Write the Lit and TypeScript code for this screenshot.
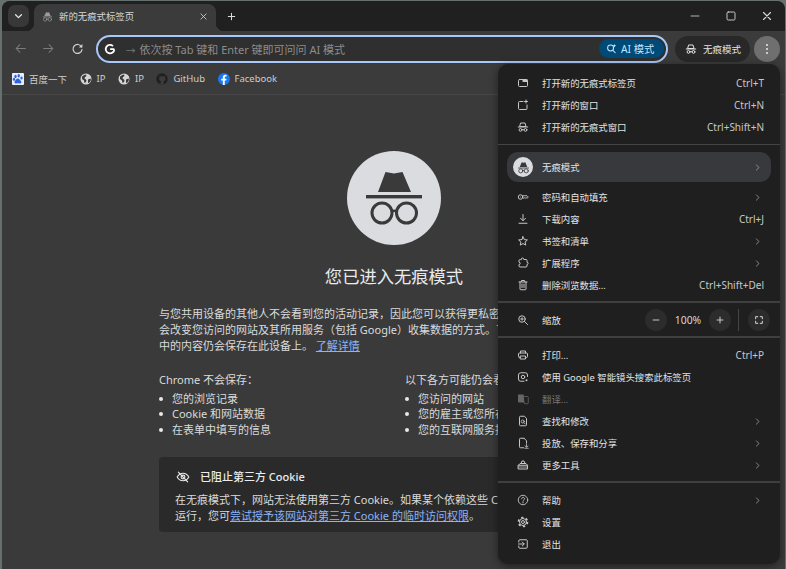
import { LitElement, html, css, svg } from "lit";
import { customElement } from "lit/decorators.js";

const S = (w = 2) => `fill:none;stroke:currentColor;stroke-width:${w};stroke-linecap:round;stroke-linejoin:round`;
const F = "fill:currentColor";

const incog = svg`<path style=${F} d="M8.700 2.500l3.300.7 3.300-.7L19 11H5z"/><path style=${F} d="M2 12.200h20v1.500H2z"/><circle cx="7" cy="18.200" r="3.800" style=${S(1.5)}/><circle cx="17" cy="18.200" r="3.800" style=${S(1.5)}/><path d="M10.700 17.600c.9-.5 1.700-.5 2.600 0" style=${S(1.4)}/>`;
const incogLine = svg`<path d="M8 4h8l2 7H6z" style=${S(2)}/><path d="M2.500 12h19" style=${S(2)}/><circle cx="7" cy="17.800" r="2.800" style=${S(2)}/><circle cx="17" cy="17.800" r="2.800" style=${S(2)}/><path d="M10 17.500h4" style=${S(1.8)}/>`;

const icons: Record<string, any> = {
  tab: svg`<rect x="3" y="5" width="18" height="14" rx="2" style=${S()}/><path style=${F} d="M11 5h10v5H11z"/>`,
  win: svg`<path d="M12 5H5a2 2 0 0 0-2 2v12a2 2 0 0 0 2 2h13a2 2 0 0 0 2-2v-7" style=${S()}/><path d="M18 2v6M15 5h6" style=${S()}/>`,
  incog,
  incogLine,
  key: svg`<circle cx="7" cy="12" r="4.500" style=${S()}/><circle cx="7" cy="12" r="1" style=${F}/><path d="M11.500 9.500H20l2.500 2.500-2 2.500-2-1-2 1-2-1-2 1" style=${S(1.8)}/>`,
  down: svg`<path d="M12 3v12M7 10.500l5 5 5-5M4 20.500h16" style=${S()}/>`,
  star: svg`<path d="M12 3.500l2.600 5.700 6.200.7-4.600 4.200 1.300 6.100L12 17.100l-5.500 3.100 1.300-6.100-4.600-4.200 6.200-.7z" style=${S()}/>`,
  ext: svg`<path d="M8.500 5V4.500a2.500 2.500 0 0 1 5 0V5H18a2 2 0 0 1 2 2v3.500a2.200 2.200 0 0 1 0 4.400V18a2 2 0 0 1-2 2H6a2 2 0 0 1-2-2v-3a2.300 2.300 0 0 0 0-4.600V7a2 2 0 0 1 2-2z" style=${S()}/>`,
  trash: svg`<path d="M4 6h16M9 5V3h6v2M6 6v14a1.500 1.500 0 0 0 1.500 1.500h9A1.500 1.500 0 0 0 18 20V6M10 10v7M14 10v7" style=${S()}/>`,
  zoom: svg`<circle cx="10" cy="10" r="6.500" style=${S()}/><path d="M15 15l6 6M10 7.500v5M7.500 10h5" style=${S()}/>`,
  print: svg`<path d="M7 8V4h10v4M7 17H5a2 2 0 0 1-2-2v-5a2 2 0 0 1 2-2h14a2 2 0 0 1 2 2v5a2 2 0 0 1-2 2h-2" style=${S()}/><path d="M7 14h10v6H7z" style=${S()}/>`,
  lens: svg`<path d="M21 11V8a4.500 4.500 0 0 0-4.500-4.500h-9A4.500 4.500 0 0 0 3 8v8a4.500 4.500 0 0 0 4.500 4.500H14" style=${S()}/><circle cx="12" cy="12" r="3.500" style=${S()}/><circle cx="19" cy="18.500" r="2" style=${F}/>`,
  trans: svg`<path style=${F} d="M2 3h11l2 16H4a2 2 0 0 1-2-2z"/><path d="M13 7h8a1.500 1.500 0 0 1 1.500 1.500V20a1.500 1.500 0 0 1-1.500 1.500h-6l-1-3" style=${S(1.6)}/>`,
  find: svg`<path d="M14 2.500H7a2 2 0 0 0-2 2v15a2 2 0 0 0 2 2h10a2 2 0 0 0 2-2V7.500z" style=${S()}/><circle cx="11.500" cy="13" r="3" style=${S(1.7)}/><path d="M14 15.500l2.500 2.500" style=${S(1.7)}/>`,
  save: svg`<path d="M14 2.500H7a2 2 0 0 0-2 2v15a2 2 0 0 0 2 2h6M14 2.500l5 5V12" style=${S()}/><path d="M19 14v5M16 18l3 2.500 3-2.500M15.500 22.500h7" style=${S(1.6)}/>`,
  tools: svg`<path d="M8 9l2-5h4l2 5M3 12.500h18V20H3zM3 12.500L6 9h12l3 3.500" style=${S()}/><path d="M3 16h18" style=${S(1.6)}/>`,
  help: svg`<circle cx="12" cy="12" r="9.500" style=${S(1.8)}/><path d="M9.200 9.500a2.900 2.900 0 1 1 4.500 2.400c-1 .7-1.700 1.300-1.700 2.600" style=${S(1.8)}/><circle cx="12" cy="17.300" r="1.200" style=${F}/>`,
  gear: svg`<circle cx="12" cy="12" r="7" style=${S(2)}/><circle cx="12" cy="12" r="3" style=${S(2)}/><circle cx="12" cy="12" r="9" style="fill:none;stroke:currentColor;stroke-width:3.400;stroke-dasharray:4.500 4.920"/>`,
  exit: svg`<path d="M3.500 8V5.500a2 2 0 0 1 2-2h13a2 2 0 0 1 2 2v13a2 2 0 0 1-2 2h-13a2 2 0 0 1-2-2V16" style=${S()}/><path d="M3 12h11M10.500 8l4 4-4 4" style=${S()}/>`,
  chev: svg`<path d="M9 5l7 7-7 7" style=${S(2)}/>`,
  minus: svg`<path d="M5 12h14" style=${S(2.2)}/>`,
  plus: svg`<path d="M12 5v14M5 12h14" style=${S(2.2)}/>`,
  full: svg`<path d="M4 9V4h5M15 4h5v5M20 15v5h-5M9 20H4v-5" style=${S(2.4)}/>`,
  back: svg`<path d="M21 12H4M11 5l-7 7 7 7" style=${S(1.9)}/>`,
  fwd: svg`<path d="M3 12h17M13 5l7 7-7 7" style=${S(1.9)}/>`,
  reload: svg`<path d="M19.500 9A8.300 8.300 0 1 0 20.300 14" style=${S(2.2)}/><path style=${F} d="M21 3.500V10h-6.500z"/>`,
  close: svg`<path d="M5 5l14 14M19 5L5 19" style=${S(2.2)}/>`,
  expand: svg`<path d="M5 9l7 7 7-7" style=${S(3)}/>`,
  minimize: svg`<path d="M4 12h16" style=${S(1.6)}/>`,
  maximize: svg`<rect x="4" y="4" width="16" height="16" rx="2.500" style=${S(1.8)}/>`,
  ai: svg`<circle cx="10" cy="11" r="6.500" style=${S(2.2)}/><path d="M15 16l5 5" style=${S(2.2)}/><path style=${F} d="M18.500 2l1.200 2.800L22.500 6l-2.800 1.200-1.200 2.800-1.200-2.800L14.500 6l2.800-1.200z"/>`,
  eyeoff: svg`<path d="M2 12s3.600-6.500 10-6.500S22 12 22 12s-3.600 6.500-10 6.500S2 12 2 12z" style=${S(1.9)}/><circle cx="12" cy="12" r="3.300" style=${S(1.9)}/><path d="M4 3.500l16 17" style=${S(1.9)}/>`,
};

const ic = (name: string) => html`<svg class="ic" viewBox="0 0 24 24">${icons[name]}</svg>`;

const heroIcon = html`<svg class="ic" viewBox="0 0 94 94">
  <path fill="#3a3a3a" d="M38.500 21l8.500 1.500 8.500-1.500L64 41H31z" />
  <rect x="19" y="44" width="56" height="3.400" fill="#3a3a3a" />
  <circle cx="35" cy="62" r="10" fill="none" stroke="#3a3a3a" stroke-width="3" />
  <circle cx="59.500" cy="62" r="10" fill="none" stroke="#3a3a3a" stroke-width="3" />
  <path d="M44.500 60.500c2-1 3.500-1 5.500 0" fill="none" stroke="#3a3a3a" stroke-width="2.600" />
</svg>`;
const googleG = html`<svg class="g" viewBox="0 0 24 24"><path d="M20.500 12.300H12.300M20.500 12.300a8.500 8.500 0 1 1-2.600-6.200" style="fill:none;stroke:#fff;stroke-width:3.600"/></svg>`;
const baidu = html`<svg class="fav" viewBox="0 0 24 24"><rect width="24" height="24" rx="2" fill="#e8eefc"/><g fill="#2f62dc"><ellipse cx="7" cy="7" rx="2.400" ry="3.300"/><ellipse cx="13.500" cy="5.500" rx="2.400" ry="3.300"/><ellipse cx="19" cy="10" rx="2.300" ry="3"/><ellipse cx="4" cy="12.500" rx="2.300" ry="3"/><path d="M12 11c3 0 3.500 3 6 5 2 2 .5 5.500-2.500 5-1.500-.3-2.500-.6-3.500-.6s-2.500.4-4 .6c-3 .2-4-3-2.300-5 2-2 2.800-5 5.800-5z"/></g></svg>`;
const globe = html`<svg class="fav" viewBox="0 0 24 24"><circle cx="12" cy="12" r="11" fill="#d3d5d8"/><path fill="#3b3b3b" d="M4 7c2-1 5-4 8-4l1 3-3 2-1 3 3 2 1 3-2 3-2 1-1-5-4-3zM16 13l5-2 1 3-3 5-3 1z"/></svg>`;
const github = html`<svg class="fav" viewBox="0 0 24 24"><circle cx="12" cy="12" r="11.500" fill="#1f2023"/><path fill="#3b3b3b" d="M6.500 5.500L9 7a9 9 0 0 1 6 0l2.500-1.500.5 3.500c1.500 2 1 6-2 7l-1 .5.500 7H9.500v-2.500c-2 .5-3-.5-4-2 1 .5 2.500 1 4 .5l.5-3-1-.5c-3-1-3.500-5-2-7z"/></svg>`;
const fb = html`<svg class="fav" viewBox="0 0 24 24"><circle cx="12" cy="12" r="12" fill="#1877f2"/><path fill="#fff" d="M13.500 24v-9h3l.6-3.700h-3.600V9c0-1 .5-2 2.100-2h1.600V3.800S15.800 3.500 14.500 3.500c-2.900 0-4.800 1.800-4.800 5v2.800H6.500V15h3.200v9z"/></svg>`;

type Row = { i?: string; t: string; s?: string; c?: boolean; off?: boolean };
const g1: Row[] = [
  { i: "tab", t: "打开新的无痕式标签页", s: "Ctrl+T" },
  { i: "win", t: "打开新的窗口", s: "Ctrl+N" },
  { i: "incogLine", t: "打开新的无痕式窗口", s: "Ctrl+Shift+N" },
];
const g2: Row[] = [
  { i: "key", t: "密码和自动填充", c: true },
  { i: "down", t: "下载内容", s: "Ctrl+J" },
  { i: "star", t: "书签和清单", c: true },
  { i: "ext", t: "扩展程序", c: true },
  { i: "trash", t: "删除浏览数据...", s: "Ctrl+Shift+Del" },
];
const g3: Row[] = [
  { i: "print", t: "打印...", s: "Ctrl+P" },
  { i: "lens", t: "使用 Google 智能镜头搜索此标签页" },
  { i: "trans", t: "翻译...", off: true },
  { i: "find", t: "查找和修改", c: true },
  { i: "save", t: "投放、保存和分享", c: true },
  { i: "tools", t: "更多工具", c: true },
];
const g4: Row[] = [
  { i: "help", t: "帮助", c: true },
  { i: "gear", t: "设置" },
  { i: "exit", t: "退出" },
];

@customElement("app-root")
export class AppRoot extends LitElement {
  static styles = css`
    :host {
      display: block;
      width: 786px;
      height: 569px;
      overflow: hidden;
      background: #66716f;
      font-family: "Noto Sans", "Noto Sans CJK SC", sans-serif;
      position: relative;
    }
    .ic { width: 100%; height: 100%; display: block; }
    .window {
      margin: 1px 1px 0 2px;
      height: 568px;
      border-radius: 8px 8px 0 0;
      overflow: hidden;
      display: flex;
      flex-direction: column;
      background: #3b3b3b;
    }
    .strip {
      height: 30px;
      background: #202020;
      display: flex;
      align-items: flex-end;
      flex: none;
      color: #e3e3e3;
    }
    .tabsearch {
      width: 21px;
      height: 22px;
      margin: 0 5px 4px 6px;
      border-radius: 7px;
      background: #383838;
      padding: 6px 5px;
      box-sizing: border-box;
      color: #e8e8e8;
    }
    .tab {
      width: 182px;
      height: 27px;
      background: #3b3b3b;
      border-radius: 8px 8px 0 0;
      display: flex;
      align-items: center;
      position: relative;
      box-sizing: border-box;
      padding: 0 8px 3px 8px;
      font-size: 9.4px;
      color: #d6d6d6;
    }
    .tab::before, .tab::after {
      content: "";
      position: absolute;
      bottom: 0;
      width: 8px;
      height: 8px;
    }
    .tab::before { left: -8px; background: radial-gradient(circle at 0 0, transparent 8px, #3b3b3b 8.5px); }
    .tab::after { right: -8px; background: radial-gradient(circle at 100% 0, transparent 8px, #3b3b3b 8.5px); }
    .tabico { width: 11px; height: 11px; color: #9a9a9a; margin-right: 6px; flex: none; }
    .tabtitle { flex: 1; white-space: nowrap; margin-left: 0; }
    .tabx { width: 9px; height: 9px; margin-right: 0; flex: none; color: #d8d8d8; }
    .newtab { width: 11px; height: 11px; margin: 0 0 9px 10px; color: #dcdcdc; }
    .spacer { flex: 1; }
    .winbtns { display: flex; align-self: center; gap: 24px; margin-right: 12px; color: #d8d8d8; padding-top: 0; }
    .winbtns div { width: 12px; height: 12px; }
    .toolbar {
      height: 35px;
      flex: none;
      display: flex;
      align-items: center;
      padding: 0 5px 0 0;
      box-sizing: border-box;
      color: #cfcfcf;
    }
    .nav { width: 13px; height: 13px; flex: none; }
    .nav.dim { color: #7c7c7c; }
    .nav.first { margin-left: 12px; }
    .nav.n2 { margin-left: 15px; }
    .nav.n3 { margin: 0 12px 0 16px; }
    .omni {
      flex: 1;
      height: 28px;
      border: 2px solid #a8c7fa;
      border-radius: 14px;
      box-sizing: border-box;
      background: #2f2f2f;
      display: flex;
      align-items: center;
      padding: 0 2px 0 6px;
      font-size: 11px;
      color: #8c8c8c;
      white-space: nowrap;
    }
    .g { width: 12px; height: 12px; margin-right: 10px; flex: none; }
    .omnitext { flex: 1; }
    .arrow { display: inline-block; font-size: 9.5px; color: #777; margin-right: 1px; }
    .aimode {
      height: 19px;
      width: 65px;
      box-sizing: border-box;
      border-radius: 10px;
      background: #004a77;
      color: #c2e7ff;
      display: flex;
      align-items: center;
      gap: 4px;
      padding-left: 7px;
      font-size: 10.3px;
    }
    .aimode span { width: 11px; height: 11px; flex: none; }
    .chip {
      width: 75px;
      height: 26px;
      margin-left: 7px;
      flex: none;
      box-sizing: border-box;
      border-radius: 13px;
      background: #282828;
      color: #e3e3e3;
      display: flex;
      align-items: center;
      gap: 6px;
      padding-left: 10px;
      font-size: 9.5px;
    }
    .chip span { width: 12px; height: 12px; flex: none; }
    .dots {
      width: 26px;
      height: 26px;
      border-radius: 50%;
      margin-left: 4px;
      flex: none;
      background: #6f6f6f;
      display: flex;
      flex-direction: column;
      align-items: center;
      justify-content: center;
      gap: 2px;
    }
    .dots i { width: 2px; height: 2px; border-radius: 50%; background: #e8e8e8; display: block; }
    .bookmarks {
      height: 29px;
      flex: none;
      display: flex;
      align-items: center;
      box-sizing: border-box;
      border-bottom: 1px solid #484848;
      padding: 0 0 3px 10px;
      font-size: 9.5px;
      color: #cdcdcd;
      gap: 12.5px;
    }
    .bm { display: flex; align-items: center; gap: 5px; white-space: nowrap; }
    .fav { width: 12px; height: 12px; display: block; flex: none; }
    .page {
      flex: 1;
      background: #3a3a3a;
      padding: 56px 0 0 157px;
      color: #d9dadc;
      font-size: 11px;
      line-height: 15.75px;
      width: 470px;
    }
    .hero {
      width: 94px;
      height: 94px;
      border-radius: 50%;
      background: #dadce0;
      margin: 0 auto;
    }
    h1 {
      margin: 18px 0 15px;
      font-size: 17.3px;
      line-height: 28px;
      font-weight: 400;
      text-align: center;
      color: #e8eaed;
    }
    p { margin: 0; white-space: nowrap; }
    a { color: #8ab4f8; text-decoration: underline; }
    .cols { display: grid; grid-template-columns: 246px 224px; margin-top: 19px; }
    .cols .head { margin-bottom: 2.5px; white-space: nowrap; }
    ul { margin: 0; padding: 0 0 0 13px; list-style: none; }
    li { position: relative; white-space: nowrap; }
    li::before {
      content: "";
      position: absolute;
      left: -13px;
      top: 6px;
      width: 4px;
      height: 4px;
      border-radius: 50%;
      background: #e8e8e8;
    }
    .card {
      margin-top: 19px;
      height: 75px;
      box-sizing: border-box;
      background: #2a2a2a;
      border-radius: 4px;
      padding: 12px 16px 0;
      overflow: hidden;
    }
    .cardhead { display: flex; align-items: center; gap: 10px; margin: 0 0 7.5px 1px; color: #ececec; font-weight: 500; }
    .cardhead span { width: 14px; height: 14px; flex: none; }
    .menu {
      position: absolute;
      left: 498px;
      top: 64px;
      width: 282px;
      height: 500px;
      box-sizing: border-box;
      background: #1f1f1f;
      border-radius: 10px;
      padding: 8px 0 9px;
      box-shadow: 0 2px 8px rgba(0, 0, 0, 0.45);
      font-size: 9.4px;
      color: #e3e3e3;
    }
    .row {
      height: 22px;
      display: flex;
      align-items: center;
      padding: 0 16px 0 19px;
      white-space: nowrap;
    }
    .row.off { color: #777; }
    .mi { width: 12px; height: 12px; margin-right: 13px; flex: none; color: #c7c7c7; }
    .off .mi { color: #666; }
    .rt { flex: 1; }
    .sc { color: #c7c7c7; font-size: 10px; }
    .chev { width: 9px; height: 9px; color: #a8a8a8; margin-right: 2px; }
    .sep { height: 1px; background: #444; }
    .s1 { margin: 6px 0 7px; }
    .s2 { height: 2px; margin: 5px 0 6px; background: #3f3f3f; }
    .hl {
      height: 30px;
      margin: 0 9px 4px;
      padding: 0 7px 0 6px;
      border-radius: 11px;
      background: #38393c;
      display: flex;
      align-items: center;
    }
    .avatar {
      width: 20px;
      height: 20px;
      border-radius: 50%;
      background: #dadce0;
      color: #38393c;
      padding: 3.5px;
      box-sizing: border-box;
      margin-right: 9px;
      flex: none;
    }
    .zoomctl { display: flex; align-items: center; margin-right: -6px; }
    .circ {
      width: 22px;
      height: 22px;
      border-radius: 50%;
      background: #2c2c2c;
      padding: 6px;
      box-sizing: border-box;
      color: #d8d8d8;
    }
    .pct { width: 42px; text-align: center; font-size: 10.4px; color: #d8d8d8; }
    .vr { width: 1px; height: 22px; background: #444; margin: 0 9px 0 7px; }
  `;

  private row(r: Row) {
    return html`<div class="row ${r.off ? "off" : ""}">
      <div class="mi">${ic(r.i!)}</div>
      <div class="rt">${r.t}</div>
      ${r.s ? html`<div class="sc">${r.s}</div>` : ""}
      ${r.c ? html`<div class="chev">${ic("chev")}</div>` : ""}
    </div>`;
  }

  render() {
    return html`
      <div class="window">
        <div class="strip">
          <div class="tabsearch">${ic("expand")}</div>
          <div class="tab">
            <div class="tabico">${ic("incog")}</div>
            <div class="tabtitle">新的无痕式标签页</div>
            <div class="tabx">${ic("close")}</div>
          </div>
          <div class="newtab">${ic("plus")}</div>
          <div class="spacer"></div>
          <div class="winbtns">
            <div>${ic("minimize")}</div>
            <div>${ic("maximize")}</div>
            <div>${ic("close")}</div>
          </div>
        </div>
        <div class="toolbar">
          <div class="nav dim first">${ic("back")}</div>
          <div class="nav dim n2">${ic("fwd")}</div>
          <div class="nav n3">${ic("reload")}</div>
          <div class="omni">
            ${googleG}
            <div class="omnitext"><span class="arrow">→</span> 依次按 Tab 键和 Enter 键即可问问 AI 模式</div>
            <div class="aimode"><span>${ic("ai")}</span>AI 模式</div>
          </div>
          <div class="chip"><span>${ic("incogLine")}</span>无痕模式</div>
          <div class="dots"><i></i><i></i><i></i></div>
        </div>
        <div class="bookmarks">
          <div class="bm">${baidu}百度一下</div>
          <div class="bm">${globe}IP</div>
          <div class="bm">${globe}IP</div>
          <div class="bm">${github}GitHub</div>
          <div class="bm">${fb}Facebook</div>
        </div>
        <div class="page">
          <div class="hero">${heroIcon}</div>
          <h1>您已进入无痕模式</h1>
          <p>与您共用设备的其他人不会看到您的活动记录，因此您可以获得更私密的浏览体验。不过，这不<br />会改变您访问的网站及其所用服务（包括 Google）收集数据的方式。下载内容、书签和阅读清单项<br />中的内容仍会保存在此设备上。 <a>了解详情</a></p>
          <div class="cols">
            <div>
              <div class="head">Chrome 不会保存：</div>
              <ul><li>您的浏览记录</li><li>Cookie 和网站数据</li><li>在表单中填写的信息</li></ul>
            </div>
            <div>
              <div class="head">以下各方可能仍会看到您的活动：</div>
              <ul><li>您访问的网站</li><li>您的雇主或您所在的组织</li><li>您的互联网服务提供商</li></ul>
            </div>
          </div>
          <div class="card">
            <div class="cardhead"><span>${ic("eyeoff")}</span>已阻止第三方 Cookie</div>
            <p>在无痕模式下，网站无法使用第三方 Cookie。如果某个依赖这些 Cookie 的网站无法正常<br />运行，您可<a>尝试授予该网站对第三方 Cookie 的临时访问权限</a>。</p>
          </div>
        </div>
      </div>
      <div class="menu">
        ${g1.map((r) => this.row(r))}
        <div class="sep s1"></div>
        <div class="hl">
          <div class="avatar">${ic("incog")}</div>
          <div class="rt">无痕模式</div>
          <div class="chev">${ic("chev")}</div>
        </div>
        ${g2.map((r) => this.row(r))}
        <div class="s2"></div>
        <div class="row">
          <div class="mi">${ic("zoom")}</div>
          <div class="rt">缩放</div>
          <div class="zoomctl">
            <div class="circ">${ic("minus")}</div>
            <div class="pct">100%</div>
            <div class="circ">${ic("plus")}</div>
            <div class="vr"></div>
            <div class="circ">${ic("full")}</div>
          </div>
        </div>
        <div class="s2"></div>
        ${g3.map((r) => this.row(r))}
        <div class="s2"></div>
        ${g4.map((r) => this.row(r))}
      </div>
    `;
  }
}
